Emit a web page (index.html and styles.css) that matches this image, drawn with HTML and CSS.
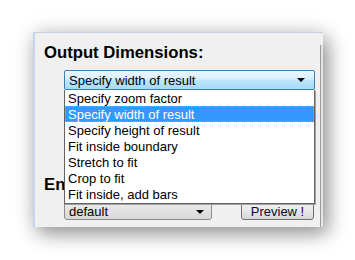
FILE: index.html
```html
<!DOCTYPE html>
<html>
<head>
<meta charset="utf-8">
<link rel="stylesheet" href="styles.css">
</head>
<body>
<div class="panel">
  <div class="content">
    <div class="title">Output Dimensions:</div>
    <div class="combo-wrap">
      <div class="combo open">
        <span class="combo-text">Specify width of result</span>
        <span class="arrow"></span>
      </div>
      <ul class="list">
        <li>Specify zoom factor</li>
        <li class="sel">Specify width of result</li>
        <li>Specify height of result</li>
        <li>Fit inside boundary</li>
        <li>Stretch to fit</li>
        <li>Crop to fit</li>
        <li>Fit inside, add bars</li>
      </ul>
    </div>
    <div class="title enc">Encoding:</div>
    <div class="row">
      <div class="combo gray">
        <span class="combo-text">default</span>
        <span class="arrow"></span>
      </div>
      <div class="button">Preview !</div>
    </div>
  </div>
  <div class="edge"></div>
</div>
</body>
</html>
```
FILE: styles.css
```css
html, body {
  margin: 0;
  padding: 0;
  background: #ffffff;
  width: 355px;
  height: 260px;
  overflow: hidden;
}
body {
  padding: 32px 0 0 33px;
  box-sizing: border-box;
  font-family: "Liberation Sans", Arial, sans-serif;
}
.panel {
  width: 290px;
  height: 195px;
  box-sizing: border-box;
  background: #f0f0f0;
  border-top: 1px solid #c3cfdf;
  border-left: 2px solid #c6d6ee;
  display: flex;
  box-shadow: 5px 7px 18px rgba(0,0,0,0.38), 0 0 22px rgba(0,0,0,0.12);
}
.content {
  flex: 1;
  padding: 11px 0 0 9px;
  display: flex;
  flex-direction: column;
}
.edge {
  width: 2px;
  margin-top: 12px;
  border-left: 1px solid #9a9a9a;
  background: #e4e4e4;
}
.title {
  font-weight: bold;
  font-size: 16.7px;
  line-height: 18px;
  color: #000;
  height: 18px;
}
.combo-wrap {
  position: relative;
  margin: 8px 0 0 20px;
  width: 251px;
}
.combo {
  height: 20px;
  box-sizing: border-box;
  display: flex;
  align-items: center;
  justify-content: space-between;
  padding: 0 9px 0 4px;
  font-size: 13px;
  color: #000;
}
.combo.open {
  border: 1px solid #3c7fb1;
  border-radius: 2px;
  background: linear-gradient(#eaf6fd 0%, #d9f0fc 45%, #bee6fd 50%, #a7d9f5 100%);
}
.arrow {
  width: 0;
  height: 0;
  border-left: 4px solid transparent;
  border-right: 4px solid transparent;
  border-top: 4px solid #000;
}
.list {
  position: absolute;
  top: 20px;
  left: 0;
  width: 251px;
  margin: 0;
  padding: 0 0 1px 0;
  list-style: none;
  background: #fff;
  border: 1px solid #646464;
  border-top: none;
  box-sizing: border-box;
  box-shadow: 1px 1px 0 #a0a0a0;
  font-size: 13px;
  z-index: 2;
}
.list li {
  height: 16px;
  line-height: 17px;
  padding-left: 3px;
  color: #000;
  box-sizing: border-box;
}
.list li.sel {
  background: #3399ff;
  color: #fff;
  outline: 1px dotted #d89a60;
  outline-offset: -1px;
}
.enc {
  margin-top: 86px;
}
.row {
  display: flex;
  align-items: flex-start;
  margin: 4px 0 0 20px;
  gap: 29px;
}
.combo.gray {
  width: 148px;
  height: 22px;
  border: 1px solid #8c8c8c;
  border-radius: 3px;
  background: linear-gradient(#f2f2f2, #e4e4e4 50%, #d8d8d8);
  padding: 5px 7px 0 4px;
}
.button {
  width: 73px;
  height: 22px;
  box-sizing: border-box;
  border: 1px solid #707070;
  border-radius: 3px;
  background: linear-gradient(#f2f2f2, #ebebeb 50%, #d6d6d6);
  font-size: 13px;
  line-height: 15px;
  padding-top: 5px;
  text-align: center;
  color: #0a0a30;
}
```
